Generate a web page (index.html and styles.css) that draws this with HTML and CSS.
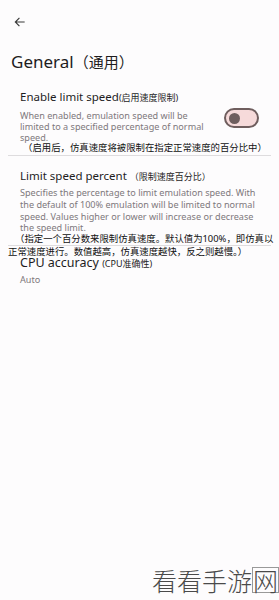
FILE: index.html
```html
<!DOCTYPE html>
<html>
<head>
<meta charset="utf-8">
<link rel="stylesheet" href="styles.css">
</head>
<body>
<div class="page">
  <div class="topbar">
    <svg class="back" width="14" height="14" viewBox="0 0 24 24"><path d="M20 12H5M11 5l-7 7 7 7" fill="none" stroke="#3a3a3a" stroke-width="2"/></svg>
  </div>
  <h1 class="title">General<span class="cn-title">（通用）</span></h1>

  <div class="item i1">
    <div class="row">
      <div class="text">
        <div class="label">Enable limit speed<span class="cn-small">(启用速度限制)</span></div>
        <div class="desc">When enabled, emulation speed will be limited to a specified percentage of normal speed.</div>
      </div>
      <div class="toggle"><span class="knob"></span></div>
    </div>
    <div class="cn-note n1">（启用后，仿真速度将被限制在指定正常速度的百分比中）</div>
  </div>
  <div class="divider d1"></div>

  <div class="item i2">
    <div class="label">Limit speed percent <span class="cn-small">（限制速度百分比）</span></div>
    <div class="desc d-long">Specifies the percentage to limit emulation speed. With the default of 100% emulation will be limited to normal speed. Values higher or lower will increase or decrease the speed limit.</div>
    <div class="cn-note n2">（指定一个百分数来限制仿真速度。默认值为100%，即仿真以</div>
  </div>
  <div class="divider d2"></div>
  <div class="cn-note n3">正常速度进行。数值越高，仿真速度越快，反之则越慢。）</div>

  <div class="item i3">
    <div class="label">CPU accuracy <span class="cn-small">(CPU准确性)</span></div>
    <div class="desc auto">Auto</div>
  </div>

  <div class="watermark">看看手游<span class="box">网</span></div>
</div>
</body>
</html>
```

FILE: styles.css
```css
* { box-sizing: border-box; }
html, body { margin: 0; padding: 0; background: #fdfcfd; }
body { width: 279px; height: 600px; overflow: hidden; font-family: "Noto Sans", "Noto Sans CJK SC", sans-serif; color: #1e1c1e; }
.page { position: relative; width: 279px; height: 600px; }
.topbar { height: 44px; padding: 15px 0 0 13px; }
.back { display: block; }
.title { margin: 0; padding: 6px 0 0 11px; font-size: 17px; font-weight: 400; line-height: 24px; color: #1e1c1e; }
.cn-title { font-size: 15px; }
.item { padding: 0 20px; }
.row { display: flex; align-items: center; margin-top: 13.5px; }
.text { flex: 1; }
.label { font-size: 11.5px; line-height: 17px; color: #1e1c1e; }
.cn-small { font-size: 9px; }
.desc { font-size: 9.1px; line-height: 11px; color: #7d787c; margin-top: 4px; }
.d-long { line-height: 11.7px; margin-top: 2.6px; }
.toggle { width: 35px; height: 20px; border: 2px solid #6f5e5e; border-radius: 10px; background: #f6dada; margin-left: 14px; margin-top: 6px; display: flex; align-items: center; padding-left: 3px; }
.knob { width: 11px; height: 11px; border-radius: 50%; background: #6f5e5e; }
.cn-note { font-size: 9.4px; line-height: 9px; color: #111; white-space: nowrap; }
.n1 { margin-left: 3px; margin-top: 0; }
.divider { height: 1px; background: #dedcde; margin: 0 8px; }
.d1 { margin-top: 3px; }
.i2 { padding-top: 11px; }
.n2 { margin-left: -5px; margin-top: 0; }
.d2 { margin-top: 2px; }
.n3 { padding-left: 8px; margin-top: 1.5px; }
.i3 .label { font-size: 12.5px; line-height: 14px; margin-top: 0; }
.auto { margin-top: 3px; }
.watermark { position: absolute; right: 0; top: 565px; font-family: "Noto Sans CJK SC", sans-serif; font-weight: 300; font-size: 25px; line-height: 30px; color: #4a4a4a; }
.box { border: 1px solid #999; display: inline-block; line-height: 24px; }
```
